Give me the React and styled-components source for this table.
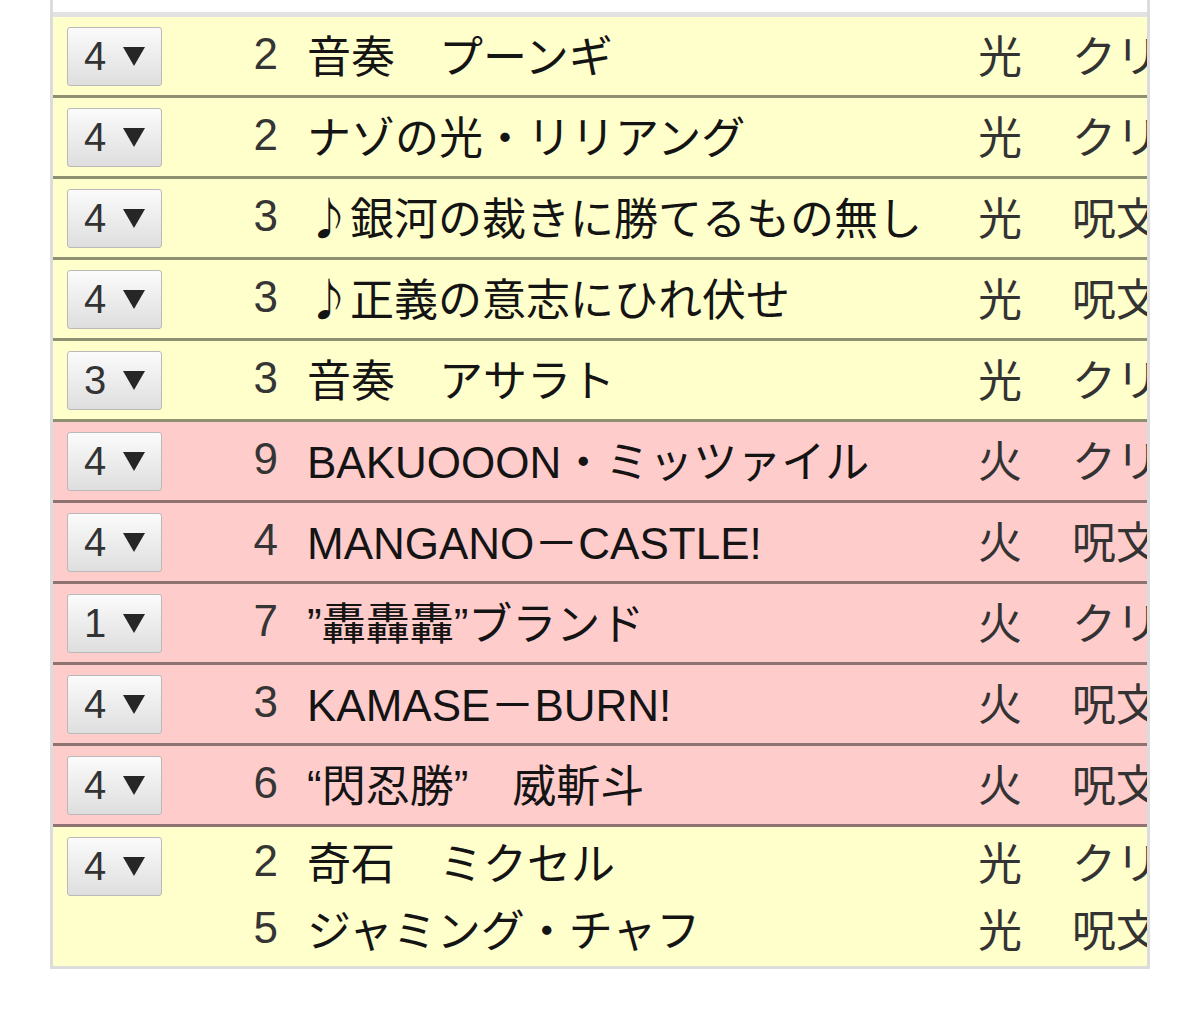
import React from "react";
import styled, { createGlobalStyle } from "styled-components";

const GlobalStyle = createGlobalStyle`
  html, body {
    margin: 0;
    padding: 0;
    background: #ffffff;
  }
  body {
    font-family: "Liberation Sans", "Noto Sans CJK JP", sans-serif;
  }
`;

const Frame = styled.div`
  margin-left: 50px;
  width: 1100px;
  box-sizing: border-box;
  border-left: 3px solid #dcdcdc;
  border-right: 3px solid #dcdcdc;
  border-bottom: 3px solid #dcdcdc;
`;

const TopStrip = styled.div`
  height: 12px;
  background: #ffffff;
  border-bottom: 5px solid #e2e2e2;
`;

const Row = styled.div`
  display: flex;
  align-items: center;
  background: ${({ $fire }) => ($fire ? "#ffcccc" : "#ffffcc")};

  &:not(:last-child) {
    border-bottom: 3px solid rgba(0, 0, 0, 0.44);
  }
`;

const SelectCell = styled.div`
  align-self: flex-start;
  padding: 10px 0 9px 14px;
`;

const SelectBox = styled.div`
  box-sizing: border-box;
  width: 95px;
  height: 59px;
  display: flex;
  align-items: center;
  padding-left: 16px;
  gap: 17px;
  border: 1px solid #b9b9b9;
  border-radius: 3px;
  background: linear-gradient(#fbfbfb, #dedede);
  font-size: 40px;
  color: #333333;
`;

const Lines = styled.div`
  flex: 1;
  min-width: 0;
  padding: 0 0 5px;
`;

const Line = styled.div`
  display: grid;
  grid-template-columns: 116px 700px 94px 1fr;
  height: 67px;
  align-items: center;
  font-size: 44px;
  white-space: nowrap;
`;

const Count = styled.span`
  text-align: right;
  color: #353535;
`;

const Name = styled.span`
  padding-left: 29px;
  color: #141414;
`;

const Note = styled.span`
  font-family: "Noto Sans CJK JP", sans-serif;
  display: inline-block;
  width: 43px;
`;

const Civ = styled.span`
  color: #333333;
`;

const Kind = styled.span`
  min-width: 0;
  overflow: hidden;
  color: #333333;
`;

function Arrow() {
  return (
    <svg width="22" height="19" viewBox="0 0 22 19">
      <polygon points="0,0 22,0 11,19" fill="#262626" />
    </svg>
  );
}

function CardName({ text }) {
  if (text.startsWith("♪")) {
    return (
      <Name>
        <Note>♪</Note>
        {text.slice(1)}
      </Name>
    );
  }
  return <Name>{text}</Name>;
}

const rows = [
  { qty: 4, cards: [[2, "音奏　プーンギ", "光", "クリーチャー"]] },
  { qty: 4, cards: [[2, "ナゾの光・リリアング", "光", "クリーチャー"]] },
  { qty: 4, cards: [[3, "♪銀河の裁きに勝てるもの無し", "光", "呪文"]] },
  { qty: 4, cards: [[3, "♪正義の意志にひれ伏せ", "光", "呪文"]] },
  { qty: 3, cards: [[3, "音奏　アサラト", "光", "クリーチャー"]] },
  { qty: 4, fire: true, cards: [[9, "BAKUOOON・ミッツァイル", "火", "クリーチャー"]] },
  { qty: 4, fire: true, cards: [[4, "MANGANO－CASTLE!", "火", "呪文"]] },
  { qty: 1, fire: true, cards: [[7, "”轟轟轟”ブランド", "火", "クリーチャー"]] },
  { qty: 4, fire: true, cards: [[3, "KAMASE－BURN!", "火", "呪文"]] },
  { qty: 4, fire: true, cards: [[6, "“閃忍勝”　威斬斗", "火", "呪文"]] },
  {
    qty: 4,
    cards: [
      [2, "奇石　ミクセル", "光", "クリーチャー"],
      [5, "ジャミング・チャフ", "光", "呪文"],
    ],
  },
];

function App() {
  return (
    <>
      <GlobalStyle />
      <Frame>
        <TopStrip />
        {rows.map((row, i) => (
          <Row key={i} $fire={row.fire}>
            <SelectCell>
              <SelectBox>
                <span>{row.qty}</span>
                <Arrow />
              </SelectBox>
            </SelectCell>
            <Lines>
              {row.cards.map(([cost, name, civ, kind], j) => (
                <Line key={j}>
                  <Count>{cost}</Count>
                  <CardName text={name} />
                  <Civ>{civ}</Civ>
                  <Kind>{kind}</Kind>
                </Line>
              ))}
            </Lines>
          </Row>
        ))}
      </Frame>
    </>
  );
}

export default App;
